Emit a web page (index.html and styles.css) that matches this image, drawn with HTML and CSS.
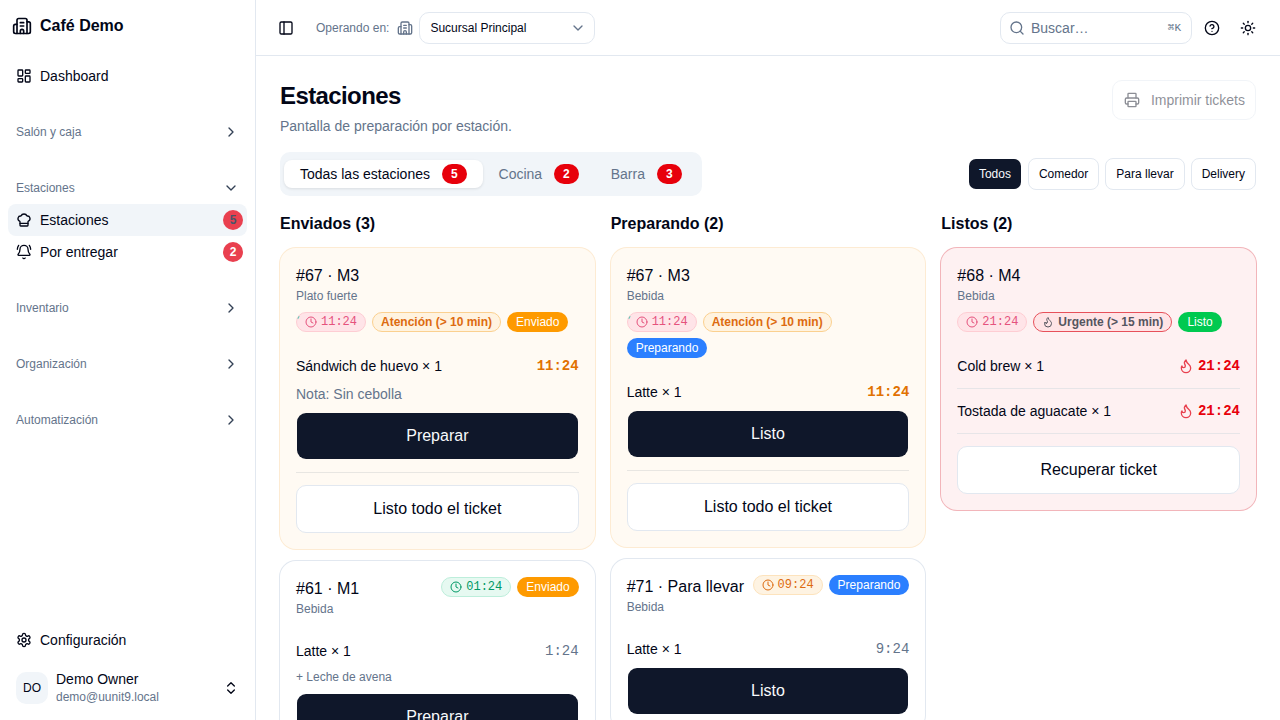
FILE: index.html
```html
<!DOCTYPE html>
<html>
<head>
    <title>Café Demo</title>
    <link rel="stylesheet" href="styles.css">
</head>
<body>
    <svg class="sprite" xmlns="http://www.w3.org/2000/svg">
        <symbol id="i-building" viewBox="0 0 24 24"><path d="M10 12h4"/><path d="M10 8h4"/><path d="M14 21v-3a2 2 0 0 0-4 0v3"/><path d="M6 10H4a2 2 0 0 0-2 2v7a2 2 0 0 0 2 2h16a2 2 0 0 0 2-2V9a2 2 0 0 0-2-2h-2"/><path d="M6 21V5a2 2 0 0 1 2-2h8a2 2 0 0 1 2 2v16"/></symbol>
        <symbol id="i-dashboard" viewBox="0 0 24 24"><rect width="7" height="9" x="3" y="3" rx="1"/><rect width="7" height="5" x="14" y="3" rx="1"/><rect width="7" height="9" x="14" y="12" rx="1"/><rect width="7" height="5" x="3" y="16" rx="1"/></symbol>
        <symbol id="i-right" viewBox="0 0 24 24"><path d="m9 18 6-6-6-6"/></symbol>
        <symbol id="i-down" viewBox="0 0 24 24"><path d="m6 9 6 6 6-6"/></symbol>
        <symbol id="i-updown" viewBox="0 0 24 24"><path d="m7 15 5 5 5-5"/><path d="m7 9 5-5 5 5"/></symbol>
        <symbol id="i-chef" viewBox="0 0 24 24"><path d="M17 21a1 1 0 0 0 1-1v-5.35c0-.457.316-.844.727-1.041a4 4 0 0 0-2.134-7.589 5 5 0 0 0-9.186 0 4 4 0 0 0-2.134 7.588c.411.198.727.585.727 1.041V20a1 1 0 0 0 1 1Z"/><path d="M6 17h12"/></symbol>
        <symbol id="i-bell" viewBox="0 0 24 24"><path d="M10.268 21a2 2 0 0 0 3.464 0"/><path d="M22 8c0-2.3-.8-4.3-2-6"/><path d="M3.262 15.326A1 1 0 0 0 4 17h16a1 1 0 0 0 .74-1.673C19.41 13.956 18 12.499 18 8A6 6 0 0 0 6 8c0 4.499-1.411 5.956-2.738 7.326"/><path d="M4 2C2.8 3.7 2 5.7 2 8"/></symbol>
        <symbol id="i-gear" viewBox="0 0 24 24"><path d="M12.22 2h-.44a2 2 0 0 0-2 2v.18a2 2 0 0 1-1 1.73l-.43.25a2 2 0 0 1-2 0l-.15-.08a2 2 0 0 0-2.73.73l-.22.38a2 2 0 0 0 .73 2.73l.15.1a2 2 0 0 1 1 1.72v.51a2 2 0 0 1-1 1.74l-.15.09a2 2 0 0 0-.73 2.73l.22.38a2 2 0 0 0 2.73.73l.15-.08a2 2 0 0 1 2 0l.43.25a2 2 0 0 1 1 1.73V20a2 2 0 0 0 2 2h.44a2 2 0 0 0 2-2v-.18a2 2 0 0 1 1-1.73l.43-.25a2 2 0 0 1 2 0l.15.08a2 2 0 0 0 2.73-.73l.22-.39a2 2 0 0 0-.73-2.73l-.15-.08a2 2 0 0 1-1-1.74v-.5a2 2 0 0 1 1-1.74l.15-.09a2 2 0 0 0 .73-2.73l-.22-.38a2 2 0 0 0-2.73-.73l-.15.08a2 2 0 0 1-2 0l-.43-.25a2 2 0 0 1-1-1.73V4a2 2 0 0 0-2-2z"/><circle cx="12" cy="12" r="3"/></symbol>
        <symbol id="i-panel" viewBox="0 0 24 24"><rect width="18" height="18" x="3" y="3" rx="2"/><path d="M9 3v18"/></symbol>
        <symbol id="i-search" viewBox="0 0 24 24"><path d="m21 21-4.34-4.34"/><circle cx="11" cy="11" r="8"/></symbol>
        <symbol id="i-help" viewBox="0 0 24 24"><circle cx="12" cy="12" r="10"/><path d="M9.09 9a3 3 0 0 1 5.83 1c0 2-3 3-3 3"/><path d="M12 17h.01"/></symbol>
        <symbol id="i-sun" viewBox="0 0 24 24"><circle cx="12" cy="12" r="4"/><path d="M12 2v2"/><path d="M12 20v2"/><path d="m4.93 4.93 1.41 1.41"/><path d="m17.66 17.66 1.41 1.41"/><path d="M2 12h2"/><path d="M20 12h2"/><path d="m6.34 17.66-1.41 1.41"/><path d="m19.07 4.93-1.41 1.41"/></symbol>
        <symbol id="i-printer" viewBox="0 0 24 24"><path d="M6 18H4a2 2 0 0 1-2-2v-5a2 2 0 0 1 2-2h16a2 2 0 0 1 2 2v5a2 2 0 0 1-2 2h-2"/><path d="M6 9V3a1 1 0 0 1 1-1h10a1 1 0 0 1 1 1v6"/><rect x="6" y="14" width="12" height="8" rx="1"/></symbol>
        <symbol id="i-clock" viewBox="0 0 24 24"><circle cx="12" cy="12" r="10"/><polyline points="12 6 12 12 16 14"/></symbol>
        <symbol id="i-flame" viewBox="0 0 24 24"><path d="M8.5 14.5A2.5 2.5 0 0 0 11 12c0-1.38-.5-2-1-3-1.072-2.143-.224-4.054 2-6 .5 2.5 2 4.9 4 6.5 2 1.6 3 3.5 3 5.5a7 7 0 1 1-14 0c0-1.153.433-2.294 1-3a2.5 2.5 0 0 0 2.5 2.5z"/></symbol>
    </svg>

    <div class="app">
        <!-- Sidebar -->
        <aside class="sidebar">
            <div class="brand">
                <svg class="icon icon-20"><use href="#i-building"/></svg>
                <span>Café Demo</span>
            </div>
            <a class="nav-item nav-first"><svg class="icon"><use href="#i-dashboard"/></svg>Dashboard</a>

            <div class="nav-group"><span>Salón y caja</span><svg class="icon"><use href="#i-right"/></svg></div>
            <div class="nav-group"><span>Estaciones</span><svg class="icon"><use href="#i-down"/></svg></div>
            <a class="nav-item active"><svg class="icon"><use href="#i-chef"/></svg>Estaciones<span class="nav-badge dim">5</span></a>
            <a class="nav-item"><svg class="icon"><use href="#i-bell"/></svg>Por entregar<span class="nav-badge">2</span></a>
            <div class="nav-group"><span>Inventario</span><svg class="icon"><use href="#i-right"/></svg></div>
            <div class="nav-group"><span>Organización</span><svg class="icon"><use href="#i-right"/></svg></div>
            <div class="nav-group"><span>Automatización</span><svg class="icon"><use href="#i-right"/></svg></div>

            <div class="sidebar-footer">
                <a class="nav-item"><svg class="icon"><use href="#i-gear"/></svg>Configuración</a>
                <div class="user">
                    <div class="avatar">DO</div>
                    <div class="user-info">
                        <div class="user-name">Demo Owner</div>
                        <div class="user-mail">demo@uunit9.local</div>
                    </div>
                    <svg class="icon"><use href="#i-updown"/></svg>
                </div>
            </div>
        </aside>

        <div class="content">
            <!-- Top bar -->
            <header class="topbar">
                <svg class="icon panel-toggle"><use href="#i-panel"/></svg>
                <span class="operating">Operando en:</span>
                <svg class="icon muted"><use href="#i-building"/></svg>
                <div class="branch-select"><span>Sucursal Principal</span><svg class="icon muted"><use href="#i-down"/></svg></div>
                <div class="topbar-right">
                    <div class="search">
                        <svg class="icon muted"><use href="#i-search"/></svg>
                        <span class="search-text">Buscar…</span>
                        <span class="search-key">⌘K</span>
                    </div>
                    <svg class="icon"><use href="#i-help"/></svg>
                    <svg class="icon"><use href="#i-sun"/></svg>
                </div>
            </header>

            <main class="main">
                <div class="page-head">
                    <div>
                        <h1>Estaciones</h1>
                        <p>Pantalla de preparación por estación.</p>
                    </div>
                    <button class="print-btn"><svg class="icon"><use href="#i-printer"/></svg>Imprimir tickets</button>
                </div>

                <div class="toolbar">
                    <div class="tabs">
                        <div class="tab selected">Todas las estaciones<span class="count">5</span></div>
                        <div class="tab">Cocina<span class="count">2</span></div>
                        <div class="tab">Barra<span class="count">3</span></div>
                    </div>
                    <div class="filters">
                        <button class="filter on">Todos</button>
                        <button class="filter">Comedor</button>
                        <button class="filter">Para llevar</button>
                        <button class="filter">Delivery</button>
                    </div>
                </div>

                <div class="board">
                    <!-- Enviados -->
                    <section class="col">
                        <h2>Enviados (3)</h2>
                        <article class="card warn">
                            <div class="card-title">#67 · M3</div>
                            <div class="card-sub">Plato fuerte</div>
                            <div class="badges">
                                <span class="timer rose speck"><svg class="icon icon-12"><use href="#i-clock"/></svg>11:24</span>
                                <span class="level attention">Atención (&gt; 10 min)</span>
                                <span class="status sent">Enviado</span>
                            </div>
                            <div class="item">
                                <div class="item-row"><span>Sándwich de huevo × 1</span><span class="time amber">11:24</span></div>
                                <div class="note">Nota: Sin cebolla</div>
                            </div>
                            <button class="btn dark">Preparar</button>
                            <hr class="sep">
                            <button class="btn light">Listo todo el ticket</button>
                        </article>
                        <article class="card">
                            <div class="card-top">
                                <div>
                                    <div class="card-title">#61 · M1</div>
                                    <div class="card-sub">Bebida</div>
                                </div>
                                <div class="top-badges">
                                    <span class="timer green"><svg class="icon icon-12"><use href="#i-clock"/></svg>01:24</span>
                                    <span class="status sent">Enviado</span>
                                </div>
                            </div>
                            <div class="item">
                                <div class="item-row"><span>Latte × 1</span><span class="time plain">1:24</span></div>
                                <div class="extra">+ Leche de avena</div>
                            </div>
                            <button class="btn dark">Preparar</button>
                        </article>
                    </section>

                    <!-- Preparando -->
                    <section class="col">
                        <h2>Preparando (2)</h2>
                        <article class="card warn">
                            <div class="card-title">#67 · M3</div>
                            <div class="card-sub">Bebida</div>
                            <div class="badges">
                                <span class="timer rose speck"><svg class="icon icon-12"><use href="#i-clock"/></svg>11:24</span>
                                <span class="level attention">Atención (&gt; 10 min)</span>
                                <span class="status preparing">Preparando</span>
                            </div>
                            <div class="item">
                                <div class="item-row"><span>Latte × 1</span><span class="time amber">11:24</span></div>
                            </div>
                            <button class="btn dark">Listo</button>
                            <hr class="sep">
                            <button class="btn light">Listo todo el ticket</button>
                        </article>
                        <article class="card">
                            <div class="card-top">
                                <div>
                                    <div class="card-title">#71 · Para llevar</div>
                                    <div class="card-sub">Bebida</div>
                                </div>
                                <div class="top-badges">
                                    <span class="timer orange"><svg class="icon icon-12"><use href="#i-clock"/></svg>09:24</span>
                                    <span class="status preparing">Preparando</span>
                                </div>
                            </div>
                            <div class="item">
                                <div class="item-row"><span>Latte × 1</span><span class="time plain">9:24</span></div>
                            </div>
                            <button class="btn dark">Listo</button>
                        </article>
                    </section>

                    <!-- Listos -->
                    <section class="col">
                        <h2>Listos (2)</h2>
                        <article class="card urgent">
                            <div class="card-title">#68 · M4</div>
                            <div class="card-sub">Bebida</div>
                            <div class="badges">
                                <span class="timer rose"><svg class="icon icon-12"><use href="#i-clock"/></svg>21:24</span>
                                <span class="level urgent-level"><svg class="icon icon-12"><use href="#i-flame"/></svg>Urgente (&gt; 15 min)</span>
                                <span class="status ready">Listo</span>
                            </div>
                            <div class="item lined">
                                <div class="item-row"><span>Cold brew × 1</span><span class="time red"><svg class="icon"><use href="#i-flame"/></svg>21:24</span></div>
                            </div>
                            <div class="item lined">
                                <div class="item-row"><span>Tostada de aguacate × 1</span><span class="time red"><svg class="icon"><use href="#i-flame"/></svg>21:24</span></div>
                            </div>
                            <button class="btn light recover">Recuperar ticket</button>
                        </article>
                    </section>
                </div>
            </main>
        </div>
    </div>
</body>
</html>
```
FILE: styles.css
```css
* {
    box-sizing: border-box;
}

html, body {
    margin: 0;
    padding: 0;
    height: 100%;
    overflow: hidden;
}

body {
    background-color: #ffffff;
    color: #020617;
    font-family: "Liberation Sans", Arial, sans-serif;
    font-size: 14px;
    line-height: 20px;
}

.sprite {
    display: none;
}

.icon {
    width: 16px;
    height: 16px;
    flex: none;
    fill: none;
    stroke: currentColor;
    stroke-width: 2;
    stroke-linecap: round;
    stroke-linejoin: round;
}

.icon-12 { width: 12px; height: 12px; }
.icon-20 { width: 20px; height: 20px; }
.muted { color: #64748b; }

.app {
    display: flex;
    height: 720px;
}

/* Sidebar */
.sidebar {
    width: 256px;
    flex: none;
    display: flex;
    flex-direction: column;
    border-right: 1px solid #e2e8f0;
    padding: 0 8px;
}

.brand {
    height: 52px;
    display: flex;
    align-items: center;
    gap: 8px;
    padding-left: 4px;
    font-size: 16px;
    font-weight: 700;
}

.nav-item {
    height: 32px;
    display: flex;
    align-items: center;
    gap: 8px;
    padding: 0 4px 0 8px;
    border-radius: 8px;
    flex: none;
}

.nav-first {
    margin-top: 8px;
}

.nav-item.active {
    background-color: #f1f5f9;
}

.nav-badge {
    margin-left: auto;
    width: 20px;
    height: 20px;
    border-radius: 50%;
    background-color: #e9404f;
    color: #ffffff;
    font-size: 12px;
    font-weight: 700;
    text-align: center;
}

.nav-badge.dim {
    color: #475569;
}

.nav-group {
    height: 32px;
    margin-top: 24px;
    display: flex;
    align-items: center;
    justify-content: space-between;
    padding: 0 8px;
    font-size: 12px;
    color: #64748b;
    flex: none;
}

.nav-group .icon {
    color: #334155;
}

.sidebar-footer {
    margin-top: auto;
}

.user {
    display: flex;
    align-items: center;
    gap: 8px;
    padding: 0 8px;
    height: 32px;
    margin: 16px 0;
}

.avatar {
    width: 32px;
    height: 32px;
    border-radius: 10px;
    background-color: #f1f5f9;
    font-size: 12px;
    text-align: center;
    line-height: 32px;
}

.user-info {
    flex: 1;
}

.user-name {
    line-height: 18px;
}

.user-mail {
    font-size: 12px;
    line-height: 18px;
    color: #64748b;
}

/* Top bar */
.content {
    flex: 1;
    min-width: 0;
    display: flex;
    flex-direction: column;
}

.topbar {
    height: 56px;
    flex: none;
    display: flex;
    align-items: center;
    border-bottom: 1px solid #e2e8f0;
    padding: 0 24px;
}

.panel-toggle {
    margin-right: 22px;
    margin-left: -2px;
}

.operating {
    font-size: 12px;
    color: #64748b;
    margin-right: 8px;
}

.branch-select {
    width: 176px;
    height: 32px;
    margin-left: 6px;
    display: flex;
    align-items: center;
    justify-content: space-between;
    padding: 0 8px 0 10px;
    border: 1px solid #e2e8f0;
    border-radius: 10px;
    font-size: 12px;
}

.topbar-right {
    margin-left: auto;
    display: flex;
    align-items: center;
    gap: 20px;
}

.search {
    width: 192px;
    height: 32px;
    display: flex;
    align-items: center;
    gap: 6px;
    padding: 0 10px 0 8px;
    border: 1px solid #e2e8f0;
    border-radius: 10px;
    margin-right: -8px;
}

.search-text {
    color: #64748b;
}

.search-key {
    margin-left: auto;
    font-family: "Liberation Mono", monospace;
    font-size: 11px;
    color: #64748b;
}

/* Main */
.main {
    flex: 1;
    padding: 24px 24px 0;
    overflow: hidden;
}

.page-head {
    display: flex;
    justify-content: space-between;
    align-items: flex-start;
}

h1 {
    margin: 0;
    font-size: 24px;
    line-height: 32px;
    font-weight: 700;
    letter-spacing: -0.6px;
}

.page-head p {
    margin: 4px 0 0;
    color: #64748b;
}

.print-btn {
    height: 40px;
    display: flex;
    align-items: center;
    gap: 11px;
    padding: 0 10px 0 11px;
    background-color: #ffffff;
    border: 1px solid #e2e8f0;
    border-radius: 10px;
    font-family: inherit;
    font-size: 14px;
    color: #020617;
    opacity: 0.45;
}

.toolbar {
    margin-top: 16px;
    display: flex;
    justify-content: space-between;
    align-items: center;
}

.tabs {
    display: flex;
    align-items: center;
    height: 44px;
    padding: 0 4px;
    background-color: #f1f5f9;
    border-radius: 10px;
}

.tab {
    height: 28px;
    display: flex;
    align-items: center;
    gap: 12px;
    padding: 0 16px;
    color: #64748b;
    border-radius: 8px;
}

.tab.selected {
    background-color: #ffffff;
    color: #020617;
    box-shadow: 0 1px 3px rgba(0, 0, 0, 0.1);
}

.count {
    width: 24.6px;
    height: 20px;
    border-radius: 10px;
    background-color: #e7000b;
    color: #ffffff;
    font-size: 12px;
    font-weight: 700;
    text-align: center;
}

.filters {
    display: flex;
    gap: 6px;
}

.filter {
    height: 32px;
    padding: 0 10px;
    background-color: #ffffff;
    border: 1px solid #e2e8f0;
    border-radius: 8px;
    font-family: inherit;
    font-size: 12px;
    color: #020617;
}

.filter.on {
    background-color: #0f172a;
    background-clip: padding-box;
    border-color: transparent;
    color: #f8fafc;
}

/* Board */
.board {
    margin-top: 16px;
    display: grid;
    grid-template-columns: repeat(3, 1fr);
    gap: 16px;
}

.col {
    min-width: 0;
}

h2 {
    margin: 0 0 12px;
    font-size: 16px;
    line-height: 24px;
    font-weight: 700;
}

/* the outline sits outside the box, so it takes no room in the card */
.card {
    margin-bottom: 12px;
    padding: 16px;
    border-radius: 16px;
    background-color: #ffffff;
    box-shadow: 0 0 0 1px #e2e8f0;
}

.card.warn {
    background-color: #fffaf3;
    box-shadow: 0 0 0 1px #fdebd3;
}

.card.urgent {
    background-color: #fef1f2;
    box-shadow: 0 0 0 1px #f2b5ba;
}

.card-top {
    display: flex;
    justify-content: space-between;
    align-items: flex-start;
}

.top-badges {
    display: flex;
    gap: 6px;
}

.card-title {
    font-size: 16px;
    line-height: 24px;
}

.card-sub {
    font-size: 12px;
    line-height: 16px;
    color: #64748b;
}

.badges {
    margin-top: 8px;
    display: flex;
    flex-wrap: wrap;
    gap: 6px;
}

.timer, .level, .status {
    height: 20px;
    display: inline-flex;
    align-items: center;
    border-radius: 10px;
    font-size: 12px;
    border: 1px solid transparent;
    padding: 0 8px;
    white-space: nowrap;
}

.timer {
    position: relative;
    gap: 4px;
    font-family: "Liberation Mono", monospace;
}

/* small teal tick on the badge corner */
.timer.speck::before {
    content: "";
    position: absolute;
    left: 1px;
    top: 3px;
    width: 1px;
    height: 3px;
    background-color: #5cc7b5;
    transform: rotate(30deg);
}

.timer.rose {
    background-color: #ffe4e8;
    border-color: #fecdd3;
    color: #e5527d;
}

.timer.green {
    background-color: #e6f9f1;
    border-color: #bdeedb;
    color: #009966;
}

.timer.orange {
    background-color: #fef3e2;
    border-color: #fde3bd;
    color: #dd6b10;
}

.level {
    font-weight: 700;
}

.level.attention {
    background-color: #fff3e0;
    border-color: #fbd08f;
    color: #dd6b10;
}

.level.urgent-level {
    gap: 4px;
    background-color: #ffe4e6;
    border-color: #e7505a;
    color: #55555f;
}

.status {
    color: #ffffff;
    border: none;
    padding: 0 9px;
}

.status.sent { background-color: #fe9a00; }
.status.preparing { background-color: #2b7fff; }
.status.ready { background-color: #00c950; }

.item {
    margin-top: 12px;
    padding-top: 12px;
}

.item.lined {
    padding: 12px 0;
    border-bottom: 1px solid #e7e5e8;
}

.item.lined + .item.lined {
    margin-top: 0;
}

.item-row {
    display: flex;
    justify-content: space-between;
    align-items: center;
}

.time {
    display: inline-flex;
    align-items: center;
    gap: 4px;
    font-family: "Liberation Mono", monospace;
}

.time.amber { color: #e17100; font-weight: 700; }
.time.red { color: #e7000b; font-weight: 700; }
.time.plain { color: #64748b; }

.time .icon {
    color: #e8414f;
}

.note {
    margin-top: 8px;
    color: #64748b;
}

.extra {
    margin-top: 8px;
    font-size: 12px;
    line-height: 16px;
    color: #64748b;
}

.btn {
    display: block;
    width: 100%;
    height: 48px;
    border-radius: 10px;
    font-family: inherit;
    font-size: 16px;
}

.btn.dark {
    margin-top: 8px;
    background-color: #0f172a;
    background-clip: padding-box;
    border: 1px solid transparent;
    color: #f8fafc;
}

.btn.light {
    background-color: #ffffff;
    border: 1px solid #e2e8f0;
    color: #020617;
}

.btn.recover {
    margin-top: 12px;
}

.sep {
    margin: 12px 0;
    border: none;
    border-top: 1px solid #e8e6e2;
}
```
